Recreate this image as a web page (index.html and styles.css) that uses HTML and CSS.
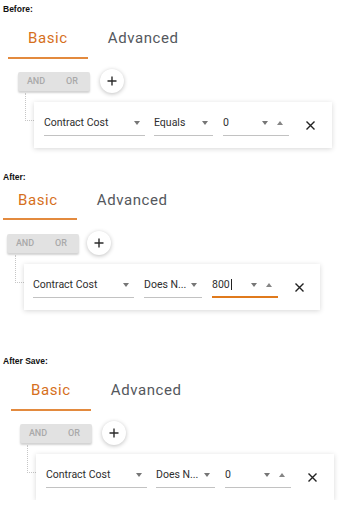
FILE: index.html
```html
<!DOCTYPE html>
<html lang="en">
<head>
    <meta charset="UTF-8">
    <meta name="viewport" content="width=device-width, initial-scale=1.0">
    <title>Query Builder - Before / After</title>
    <link rel="stylesheet" href="styles.css">
</head>
<body>
    <!-- Before -->
    <section class="shot shot-before">
        <div class="caption">Before:</div>
        <div class="tabs">
            <div class="tab active">Basic</div>
            <div class="tab">Advanced</div>
        </div>
        <div class="builder">
            <div class="group-head">
                <div class="toggle"><span>AND</span><span>OR</span></div>
                <button class="add-btn" type="button">
                    <svg width="10" height="10" viewBox="0 0 10 10"><path d="M5 0.5V9.5M0.5 5H9.5" stroke="#2b2b2b" stroke-width="1.4"/></svg>
                </button>
            </div>
            <div class="rule-row">
                <div class="connector"></div>
                <div class="rule-card">
                    <div class="field field-name"><span class="value">Contract Cost</span><span class="caret-down"></span></div>
                    <div class="field field-op"><span class="value">Equals</span><span class="caret-down"></span></div>
                    <div class="field field-num"><span class="value">0</span><span class="caret-down"></span><span class="caret-up"></span></div>
                    <button class="remove-btn" type="button">
                        <svg width="9" height="9" viewBox="0 0 9 9"><path d="M0.5 0.5L8.5 8.5M8.5 0.5L0.5 8.5" stroke="#222" stroke-width="1.4"/></svg>
                    </button>
                </div>
            </div>
        </div>
    </section>

    <!-- After -->
    <section class="shot shot-after">
        <div class="caption">After:</div>
        <div class="tabs">
            <div class="tab active">Basic</div>
            <div class="tab">Advanced</div>
        </div>
        <div class="builder">
            <div class="group-head">
                <div class="toggle"><span>AND</span><span>OR</span></div>
                <button class="add-btn" type="button">
                    <svg width="10" height="10" viewBox="0 0 10 10"><path d="M5 0.5V9.5M0.5 5H9.5" stroke="#2b2b2b" stroke-width="1.4"/></svg>
                </button>
            </div>
            <div class="rule-row">
                <div class="connector"></div>
                <div class="rule-card">
                    <div class="field field-name"><span class="value">Contract Cost</span><span class="caret-down"></span></div>
                    <div class="field field-op"><span class="value">Does N...</span><span class="caret-down"></span></div>
                    <div class="field field-num is-focused"><span class="value">800<span class="cursor"></span></span><span class="caret-down"></span><span class="caret-up"></span></div>
                    <button class="remove-btn" type="button">
                        <svg width="9" height="9" viewBox="0 0 9 9"><path d="M0.5 0.5L8.5 8.5M8.5 0.5L0.5 8.5" stroke="#222" stroke-width="1.4"/></svg>
                    </button>
                </div>
            </div>
        </div>
    </section>

    <!-- After save -->
    <section class="shot shot-save">
        <div class="caption">After Save:</div>
        <div class="tabs">
            <div class="tab active">Basic</div>
            <div class="tab">Advanced</div>
        </div>
        <div class="builder">
            <div class="group-head">
                <div class="toggle"><span>AND</span><span>OR</span></div>
                <button class="add-btn" type="button">
                    <svg width="10" height="10" viewBox="0 0 10 10"><path d="M5 0.5V9.5M0.5 5H9.5" stroke="#2b2b2b" stroke-width="1.4"/></svg>
                </button>
            </div>
            <div class="rule-row">
                <div class="connector"></div>
                <div class="rule-card">
                    <div class="field field-name"><span class="value">Contract Cost</span><span class="caret-down"></span></div>
                    <div class="field field-op"><span class="value">Does N...</span><span class="caret-down"></span></div>
                    <div class="field field-num"><span class="value">0</span><span class="caret-down"></span><span class="caret-up"></span></div>
                    <button class="remove-btn" type="button">
                        <svg width="9" height="9" viewBox="0 0 9 9"><path d="M0.5 0.5L8.5 8.5M8.5 0.5L0.5 8.5" stroke="#222" stroke-width="1.4"/></svg>
                    </button>
                </div>
            </div>
        </div>
    </section>
</body>
</html>
```

FILE: styles.css
```css
body {
    margin: 0;
    padding-top: 2px;
    width: 341px;
    overflow: hidden;
    background: #fff;
    color: #333;
    font-family: Roboto, "Noto Sans", sans-serif;
}
.caption {
    margin-top: 1px;
    padding-left: 3px;
    font: bold 8.5px/12px "Liberation Sans", Arial, sans-serif;
    color: #111;
}

/* tabs */
.tabs {
    display: flex;
    padding-left: 8px;
}
.tab {
    padding: 14px 20px 9px;
    border-bottom: 2px solid transparent;
    font-size: 15px;
    font-weight: 400;
    line-height: 19px;
    letter-spacing: 0.6px;
    color: #54585d;
}
.tab.active {
    color: #d6701c;
    border-bottom-color: #e38a3e;
}

/* query builder */
.builder {
    padding-left: 18px;
}
.group-head {
    display: flex;
    align-items: center;
    gap: 10px;
    margin-top: 10px;
}
.toggle {
    display: flex;
    height: 19px;
    background: #e2e2e2;
    border-radius: 2px;
    box-shadow: 0 2px 2px rgba(0,0,0,0.18);
}
.toggle span {
    width: 36px;
    display: flex;
    align-items: center;
    justify-content: center;
    font-size: 9px;
    font-weight: 500;
    color: #a9a9a9;
}
.add-btn {
    width: 24px;
    height: 24px;
    padding: 0;
    border: none;
    border-radius: 50%;
    background: #fff;
    box-shadow: 0 1px 4px rgba(0,0,0,0.25);
    display: flex;
    align-items: center;
    justify-content: center;
}
.rule-row {
    display: flex;
    align-items: flex-start;
    padding-left: 7px;
}
.connector {
    width: 9px;
    height: 28px;
    box-sizing: border-box;
    border-left: 1px dotted #c6c6c6;
    border-bottom: 1px dotted #c6c6c6;
}
.rule-card {
    display: flex;
    align-items: flex-start;
    width: 298px;
    box-sizing: border-box;
    margin-top: 9px;
    padding: 13px 17px 12px 10px;
    background: #fff;
    box-shadow: 0 1px 5px rgba(0,0,0,0.16);
}
.field {
    display: flex;
    align-items: center;
    box-sizing: border-box;
    height: 21px;
    padding: 0 5px 4px 0;
    border-bottom: 1px solid #c2c2c2;
    font-size: 10.5px;
    line-height: 16px;
    color: #2e2e2e;
}
.field .value {
    flex: 1;
    white-space: nowrap;
}
.field-name {
    width: 101px;
    margin-right: 9px;
}
.field-op {
    width: 59px;
    margin-right: 10px;
}
.field-num {
    width: 66px;
    padding-right: 6px;
}
.field.is-focused {
    border-bottom: 2px solid #e07a1c;
    padding-bottom: 3px;
}
.cursor {
    display: inline-block;
    width: 1px;
    height: 11px;
    margin-left: 1px;
    vertical-align: -2px;
    background: #222;
}
.caret-down {
    width: 0;
    height: 0;
    border-left: 3.5px solid transparent;
    border-right: 3.5px solid transparent;
    border-top: 4px solid #767676;
}
.caret-up {
    width: 0;
    height: 0;
    margin-left: 9px;
    border-left: 3.5px solid transparent;
    border-right: 3.5px solid transparent;
    border-bottom: 4px solid #858585;
}
.remove-btn {
    width: 9px;
    height: 9px;
    margin: 6px 0 0 17px;
    padding: 0;
    border: none;
    background: none;
    display: flex;
}

/* second screenshot is a touch smaller */
.shot-after {
    margin-top: 23px;
}
.shot-after .tabs {
    padding-left: 3px;
}
.shot-after .tab {
    padding: 8px 19px 8px 20px;
}
.shot-after .tab:first-child {
    padding-left: 15px;
}
.shot-after .builder {
    padding-left: 7px;
}
.shot-after .group-head {
    margin-top: 11px;
    gap: 8px;
}
.shot-after .rule-row {
    padding-left: 8px;
}
.shot-after .rule-card {
    width: 296px;
    padding-left: 9px;
    padding-right: 15px;
}
.shot-after .field-name {
    margin-right: 10px;
}
.shot-after .field-op {
    width: 58px;
}

.shot-save {
    margin-top: 45px;
}
.shot-save .tabs {
    padding-left: 11px;
}
.shot-save .builder {
    padding-left: 20px;
}
```
